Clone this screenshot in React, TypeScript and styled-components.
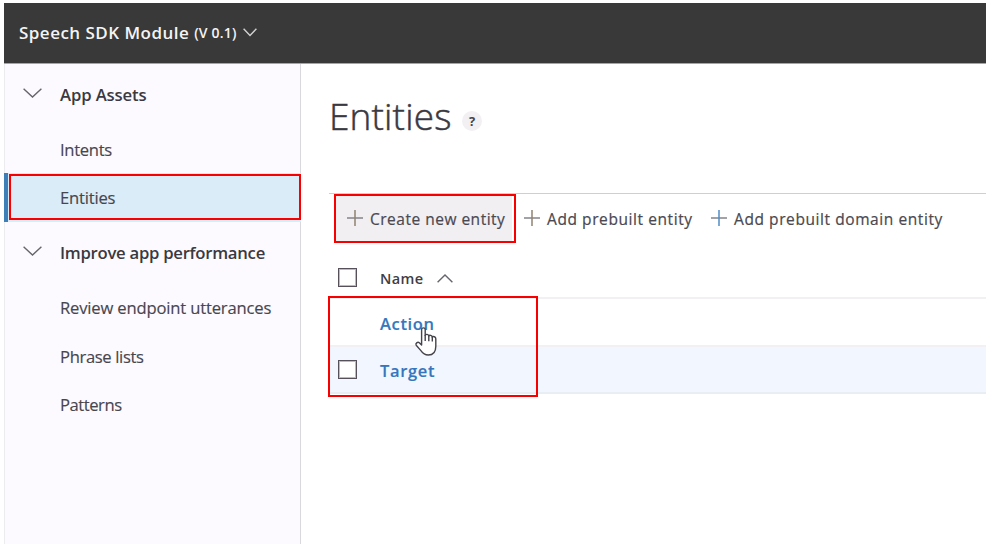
import React from 'react';
import styled, { createGlobalStyle } from 'styled-components';

const GlobalStyle = createGlobalStyle`
  *, *::before, *::after { box-sizing: border-box; }
  body {
    margin: 0;
    background: #fff;
    font-family: "Open Sans", "Noto Sans", sans-serif;
    color: #3b3a40;
    overflow: hidden;
  }
`;

const Page = styled.div`
  width: 989px;
  height: 545px;
  padding: 3px 3px 1px 4px;
  display: flex;
  flex-direction: column;
  background: #fff;
`;

const TopBar = styled.header`
  height: 61px;
  flex: none;
  display: flex;
  align-items: center;
  padding: 0 0 1px 15px;
  background: #393939;
  border-bottom: 1px solid #a5a4a6;
  color: #f4f4f4;
  white-space: nowrap;
`;

const AppName = styled.span`
  font-size: 17px;
  font-weight: 600;
  letter-spacing: 0.47px;
`;

const Version = styled.span`
  margin: 0 0 0 5px;
  font-size: 14px;
  font-weight: 600;
  letter-spacing: 0.2px;
`;

const TopChevron = styled.svg`
  margin: 0 0 0 6px;
`;

const Body = styled.div`
  flex: 1;
  min-height: 0;
  display: flex;
`;

const Sidebar = styled.nav`
  width: 297px;
  flex: none;
  background: #fcfafe;
  border-left: 1px solid #ecebee;
  border-right: 1px solid #d9d8dc;
`;

const GroupHeading = styled.div<{ $tracking: number }>`
  display: flex;
  align-items: center;
  padding-left: 18px;
  gap: 18px;
  font-size: 16.7px;
  font-weight: 600;
  letter-spacing: ${p => p.$tracking}px;
  color: #3a3940;
  white-space: nowrap;

  svg { margin-top: -3px; }
`;

const NavGroup = styled.section<{ $rowHeight: number; $headHeight: number }>`
  display: grid;
  grid-auto-rows: ${p => p.$rowHeight}px;
  grid-template-rows: ${p => p.$headHeight}px;
`;

const NavItem = styled.a<{ $selected?: boolean; $tracking: number; $nudge?: boolean }>`
  position: relative;
  display: flex;
  align-items: center;
  margin: 0 -1px;
  padding-top: ${p => (p.$nudge ? 1.5 : 0)}px;
  padding-left: ${p => (p.$selected ? 52 : 56)}px;
  border-left: ${p => (p.$selected ? '4px solid #3f7fb8' : '0 solid')};
  background: ${p => (p.$selected ? '#daecf8' : 'transparent')};
  font-size: 16.6px;
  letter-spacing: ${p => p.$tracking}px;
  -webkit-text-stroke: 0.15px currentColor;
  color: #47464e;
  white-space: nowrap;
`;

const Highlight = styled.div<{ $inset: string }>`
  position: absolute;
  inset: ${p => p.$inset};
  border: 2px solid #f80000;
  pointer-events: none;
`;

const Main = styled.main`
  flex: 1;
  min-width: 0;
  display: flex;
  flex-direction: column;
  padding-left: 28px;
`;

const TitleRow = styled.div`
  height: 129px;
  display: flex;
  align-items: flex-start;
  padding-top: 26px;
`;

const Title = styled.h1`
  margin: 0;
  font-size: 37px;
  line-height: 52px;
  font-weight: 300;
  letter-spacing: 0.15px;
  -webkit-text-stroke: 0.5px currentColor;
  color: #3a3941;
`;

const Help = styled.span`
  width: 20px;
  height: 20px;
  margin: 21px 0 0 10.5px;
  border-radius: 50%;
  display: grid;
  place-items: center;
  background: #f2f0f3;
  font-size: 13px;
  line-height: 20px;
  font-weight: 700;
  color: #45434a;
`;

const Toolbar = styled.div`
  height: 50px;
  flex: none;
  display: flex;
  border-top: 1px solid #cfced1;
  padding: 1px 0 1px 6px;
`;

const ToolButton = styled.div<{ $active?: boolean; $width: number }>`
  position: relative;
  width: ${p => p.$width}px;
  display: flex;
  align-items: center;
  gap: 7px;
  padding: 0 0 0 12px;
  background: ${p => (p.$active ? '#f1eff2' : 'transparent')};
  font-size: 15.5px;
  letter-spacing: ${p => (p.$active ? 0.5 : 0.58)}px;
  -webkit-text-stroke: 0.2px currentColor;
  color: #4a4850;
  white-space: nowrap;

  svg { flex: none; margin-top: -2px; }
`;

const Table = styled.div`
  position: relative;
  padding-top: 15px;
`;

const TableRow = styled.div<{ $kind: 'head' | 'plain' | 'striped' }>`
  display: grid;
  grid-template-columns: 51px 1fr;
  align-items: center;
  height: ${p => (p.$kind === 'head' ? 41 : p.$kind === 'plain' ? 48 : 47)}px;
  padding-top: ${p => (p.$kind === 'head' ? 0 : 2)}px;
  background: ${p => (p.$kind === 'striped' ? '#f2f6fe' : '#fff')};
  border-bottom: 2px solid ${p => (p.$kind === 'striped' ? '#e9eef5' : '#f2f0f2')};
`;

const Checkbox = styled.span<{ $lift?: number }>`
  width: 19px;
  height: 19px;
  margin: 0 0 ${p => p.$lift ?? 0}px 8.5px;
  border: 1.4px solid #55505a;
  outline: 0.5px solid #bdb9c0;
  outline-offset: -2px;
  background: #fff;
`;

const ColumnTitle = styled.span`
  display: flex;
  align-items: center;
  gap: 14px;
  padding-top: 1px;
  font-size: 14.5px;
  font-weight: 600;
  letter-spacing: 0.35px;
  color: #3f3e46;
`;

const EntityLink = styled.a`
  justify-self: start;
  position: relative;
  font-size: 16.5px;
  font-weight: 600;
  letter-spacing: 0.65px;
  -webkit-text-stroke: 0.15px currentColor;
  color: #3577bd;
`;

const Pointer = styled.svg`
  position: absolute;
  left: 35px;
  top: 15px;
  overflow: visible;
`;

const Chevron = ({ w, h, up = false }: { w: number; h: number; up?: boolean }) => (
  <svg width={w} height={h} viewBox={`0 0 ${w} ${h}`} fill="none" stroke="#66656d" strokeWidth="1.4">
    <path d={up ? `M.6 ${h - 0.7}L${w / 2} 1L${w - 0.6} ${h - 0.7}` : `M.6 .7L${w / 2} ${h - 1}L${w - 0.6} .7`} />
  </svg>
);

const Plus = ({ color }: { color: string }) => (
  <svg width="16" height="16" viewBox="0 0 16 16" fill="none" strokeWidth="1.5">
    <path d="M0 8H16" stroke="#85838a" />
    <path d="M8 0V16" stroke={color} />
  </svg>
);

const HandCursor = () => (
  <Pointer width="22" height="29" viewBox="0 0 22 29" fill="#fff" stroke="#45434b" strokeWidth="1.4" strokeLinejoin="round">
    <path d="M6.6 18V2.4C6.6 .3 10.2 .3 10.2 2.4V8.4C10.6 6.9 13.5 7.1 13.8 9C14.4 7.8 17.1 8.2 17.3 10.1C18.2 9.1 20.8 9.6 20.8 11.8V19.2C20.8 24.5 18.4 28 13.3 28C9.4 28 7.7 26.3 5.9 23.6L1.2 18.2C.1 16.4 2.6 14.5 4.3 15.8L6.6 18Z" />
    <path d="M10.2 8V14M13.8 9V14.2M17.3 10V14.5" fill="none" />
  </Pointer>
);

const groups = [
  {
    title: 'App Assets', headHeight: 60.5, headTracking: -0.12, rowHeight: 48.7,
    items: [{ label: 'Intents', tracking: -0.3 }, { label: 'Entities', tracking: -0.2 }],
  },
  {
    title: 'Improve app performance', headHeight: 61.5, headTracking: -0.27, rowHeight: 48.6,
    items: [
      { label: 'Review endpoint utterances', tracking: -0.17 },
      { label: 'Phrase lists', tracking: -0.35 },
      { label: 'Patterns', tracking: -0.45 },
    ],
  },
];

const actions = [
  { label: 'Create new entity', width: 177, plus: '#8f8271' },
  { label: 'Add prebuilt entity', width: 187, plus: '#8f8271' },
  { label: 'Add prebuilt domain entity', width: 260, plus: '#4f8dc4' },
];

export default function App() {
  return (
    <Page>
      <GlobalStyle />
      <TopBar>
        <AppName>Speech SDK Module</AppName>
        <Version>(V 0.1)</Version>
        <TopChevron width="14" height="9" viewBox="0 0 14 9" fill="none" stroke="#d2d2d2" strokeWidth="1.4">
          <path d="M.6 .8L7 7.6L13.4 .8" />
        </TopChevron>
      </TopBar>
      <Body>
        <Sidebar>
          {groups.map(group => (
            <NavGroup key={group.title} $rowHeight={group.rowHeight} $headHeight={group.headHeight}>
              <GroupHeading $tracking={group.headTracking}>
                <Chevron w={19} h={10} />
                {group.title}
              </GroupHeading>
              {group.items.map(({ label, tracking }) => (
                <NavItem key={label} $selected={label === 'Entities'} $tracking={tracking} $nudge={label === 'Intents'}>
                  {label}
                  {label === 'Entities' && <Highlight $inset="1px 0 2px 1px" />}
                </NavItem>
              ))}
            </NavGroup>
          ))}
        </Sidebar>
        <Main>
          <TitleRow>
            <Title>Entities</Title>
            <Help>?</Help>
          </TitleRow>
          <Toolbar>
            {actions.map((action, i) => (
              <ToolButton key={action.label} $active={i === 0} $width={action.width}>
                <Plus color={action.plus} />
                {action.label}
                {i === 0 && <Highlight $inset="-1px -4px -1px -1px" />}
              </ToolButton>
            ))}
          </Toolbar>
          <Table>
            <TableRow $kind="head">
              <Checkbox />
              <ColumnTitle>
                Name
                <Chevron w={16} h={9} up />
              </ColumnTitle>
            </TableRow>
            <TableRow $kind="plain">
              <span />
              <EntityLink>
                Action
                <HandCursor />
              </EntityLink>
            </TableRow>
            <TableRow $kind="striped">
              <Checkbox $lift={2} />
              <EntityLink>Target</EntityLink>
            </TableRow>
            <Highlight $inset="53px 448px -3px -1px" />
          </Table>
        </Main>
      </Body>
    </Page>
  );
}
